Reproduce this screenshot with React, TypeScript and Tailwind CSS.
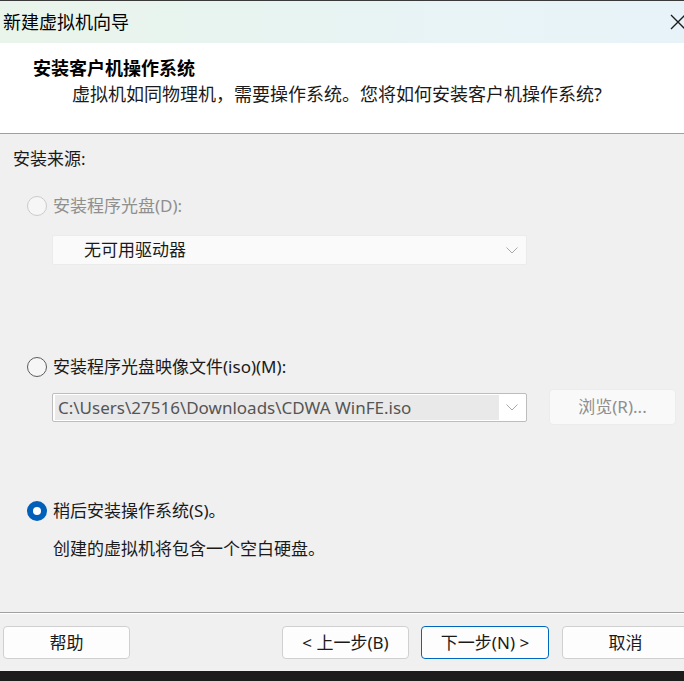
import React from 'react';

const font = { fontFamily: '"Noto Sans", "Noto Sans CJK SC", sans-serif' };

const Chevron: React.FC = () => (
  <svg width="12" height="7" viewBox="0 0 12 7" className="shrink-0">
    <path d="M0.5 0.5 L6 6 L11.5 0.5" fill="none" stroke="#a8a8a8" strokeWidth="1" />
  </svg>
);

type RadioProps = { state: 'disabled' | 'off' | 'on' };

const Radio: React.FC<RadioProps> = ({ state }) => {
  if (state === 'on') {
    return (
      <span className="w-5 h-5 rounded-full bg-[#005fb8] flex items-center justify-center shrink-0">
        <span className="w-2 h-2 rounded-full bg-white" />
      </span>
    );
  }
  return (
    <span
      className={
        state === 'disabled'
          ? 'w-5 h-5 rounded-full border border-[#cbcbcb] bg-[#f6f6f6] shrink-0'
          : 'w-5 h-5 rounded-full border border-[#5c5c5c] bg-[#f6f6f6] shrink-0'
      }
    />
  );
};

const FooterButton: React.FC<{ label: string; primary?: boolean }> = ({ label, primary }) => (
  <button
    className={
      primary
        ? 'w-[128px] h-[33px] shrink-0 rounded-[4px] border border-[#0067c0] bg-[#fdfdfd] text-[17px] text-[#1a1a1a] leading-none'
        : 'w-[127px] h-[33px] shrink-0 rounded-[4px] border border-[#d0d0d0] bg-[#fdfdfd] text-[17px] text-[#1a1a1a] leading-none'
    }
  >
    {label}
  </button>
);

const App: React.FC = () => {
  return (
    <div className="w-[684px] h-[681px] bg-[#1c1c1c] flex flex-col overflow-hidden" style={font}>
      <div className="h-[671px] flex flex-col bg-[#f0f0f0] border-t border-[#3a3a3a] overflow-hidden">
        {/* title bar */}
        <div className="h-[42px] shrink-0 flex items-center justify-between pl-[3px] bg-gradient-to-r from-[#e9f4ea] via-[#e8f4f3] to-[#e7f3f9]">
          <span className="text-[18px] leading-[24px] text-black">新建虚拟机向导</span>
          <svg width="16" height="16" viewBox="0 0 16 16" className="mr-[-2px] mt-[-1px]">
            <path d="M1 1 L15 15 M15 1 L1 15" stroke="#1a1a1a" strokeWidth="1.3" />
          </svg>
        </div>

        {/* header */}
        <div className="h-[91px] shrink-0 bg-white pl-[33px] pt-[13px] border-b border-[#a0a0a0]">
          <div className="text-[18px] leading-[24px] font-bold text-black">安装客户机操作系统</div>
          <div className="text-[18px] leading-[24px] text-[#1a1a1a] pl-[39px] mt-[2px]">
            虚拟机如同物理机，需要操作系统。您将如何安装客户机操作系统?
          </div>
        </div>

        {/* body */}
        <div className="flex-1 flex flex-col pl-[13px] text-[17px] leading-[24px]">
          <div className="mt-[13px] h-[24px] text-[#1a1a1a]">安装来源:</div>

          <div className="mt-[23px] h-[24px] flex items-center gap-[6px] pl-[14px]">
            <Radio state="disabled" />
            <span className="text-[#8f8f8f]">安装程序光盘(D):</span>
          </div>

          <div className="mt-[17px] ml-[39px] w-[475px] h-[30px] flex items-center justify-between bg-[#fafafa] border border-[#ebebeb] rounded-[2px] pl-[31px] pr-[8px]">
            <span className="text-[#1a1a1a]">无可用驱动器</span>
            <Chevron />
          </div>

          <div className="mt-[90px] h-[24px] flex items-center gap-[6px] pl-[14px]">
            <Radio state="off" />
            <span className="text-[#1a1a1a]">安装程序光盘映像文件(iso)(M):</span>
          </div>

          <div className="mt-[10px] h-[36px] flex items-center gap-[22px] pl-[39px]">
            <div className="w-[475px] h-[29px] flex items-center justify-between bg-white border border-[#bdbdbd] rounded-[2px] pl-[2px] pr-[8px]">
              <span className="w-[444px] h-[25px] bg-[#e9e9e9] pl-[3px] text-[#555555] leading-[25px] whitespace-nowrap overflow-hidden">
                C:\Users\27516\Downloads\CDWA WinFE.iso
              </span>
              <Chevron />
            </div>
            <button className="w-[127px] h-[36px] rounded-[4px] border border-[#ececec] bg-[#f9f9f9] text-[#8f8f8f] text-[17px]">
              浏览(R)...
            </button>
          </div>

          <div className="mt-[74px] h-[24px] flex items-center gap-[6px] pl-[14px]">
            <Radio state="on" />
            <span className="text-[#1a1a1a]">稍后安装操作系统(S)。</span>
          </div>

          <div className="mt-[14px] h-[24px] pl-[40px] text-[#1a1a1a]">创建的虚拟机将包含一个空白硬盘。</div>
        </div>

        {/* footer */}
        <div className="h-[59px] shrink-0 border-t border-[#a0a0a0] shadow-[inset_0_1px_0_#ffffff] flex items-start pt-[13px] pl-[3px]">
          <FooterButton label="帮助" />
          <div className="w-[152px] shrink-0" />
          <FooterButton label="< 上一步(B)" />
          <div className="w-[12px] shrink-0" />
          <FooterButton label="下一步(N) >" primary />
          <div className="w-[13px] shrink-0" />
          <FooterButton label="取消" />
        </div>
      </div>
    </div>
  );
};

export default App;
